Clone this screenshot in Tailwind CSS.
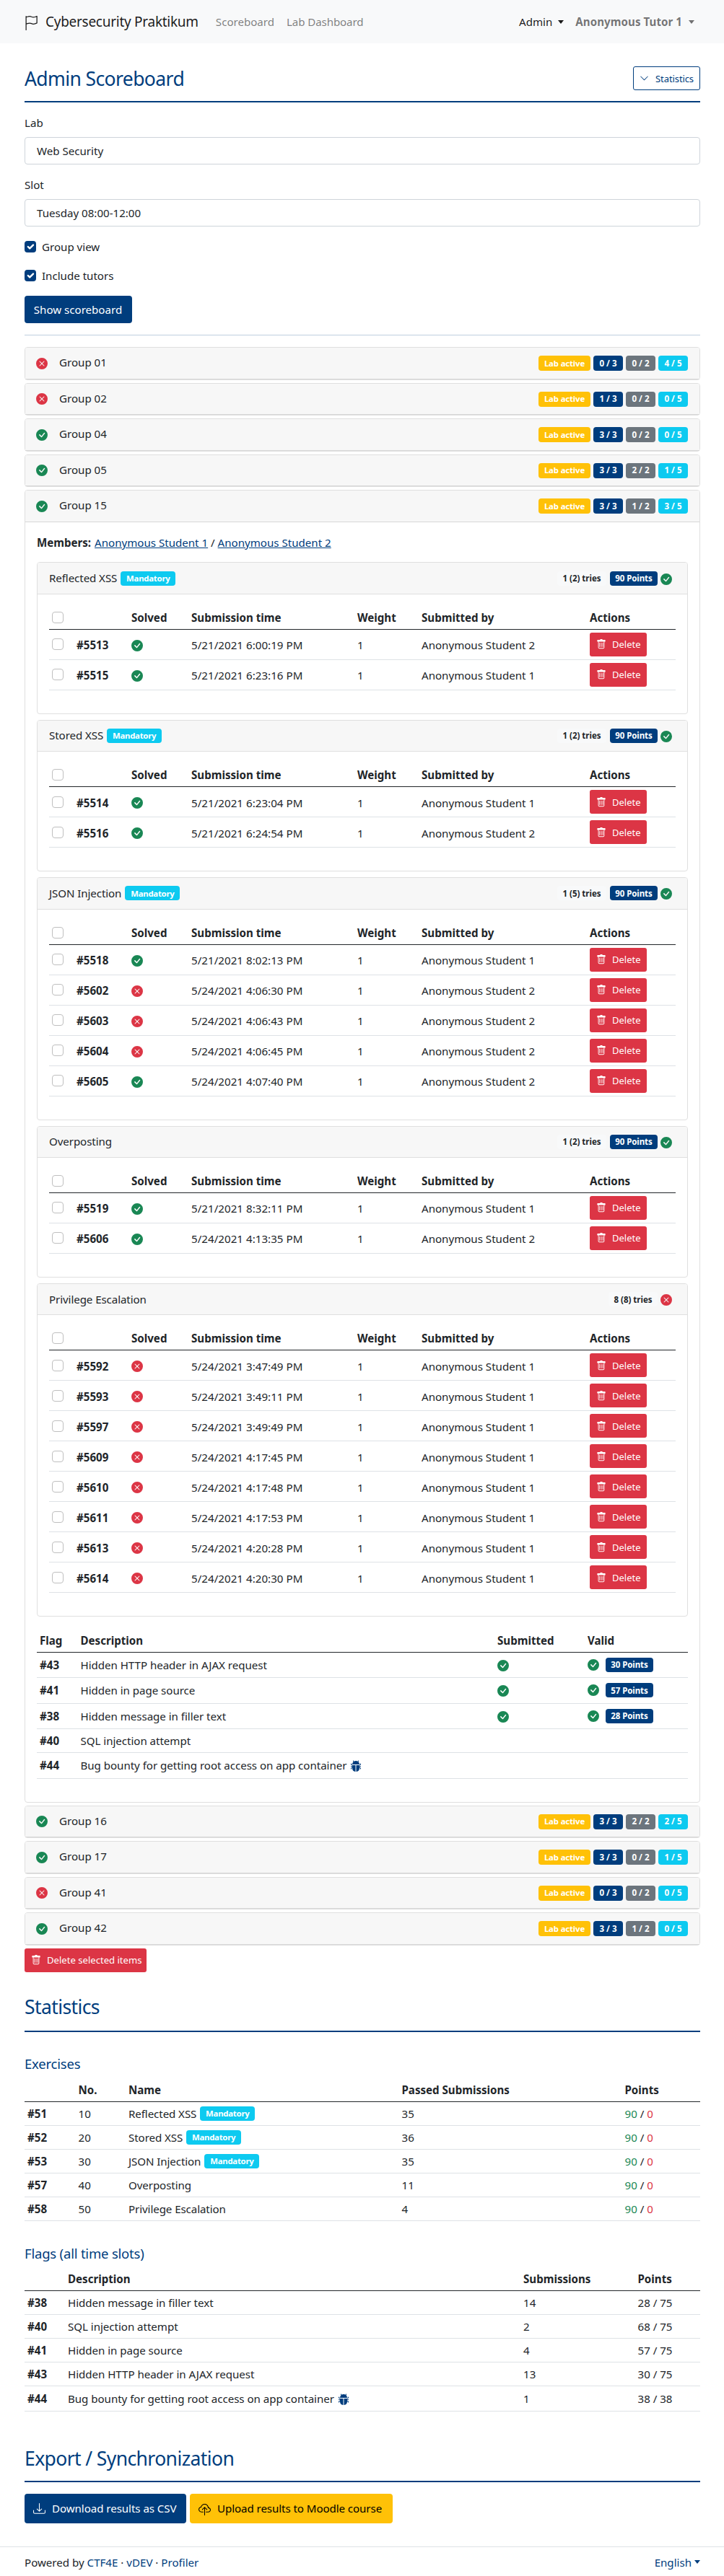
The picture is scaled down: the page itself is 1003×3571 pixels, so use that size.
<!DOCTYPE html>
<html lang="en">
<head>
<meta charset="utf-8">
<title>Admin Scoreboard</title>
<script src="https://cdn.jsdelivr.net/npm/@tailwindcss/browser@4"></script>
</head>
<body class="bg-white text-[#212529] font-['Noto_Sans',sans-serif] text-[15.1px] leading-6">
<svg class="hidden">
  <symbol id="flag" viewBox="0 0 16 16"><path fill-rule="evenodd" d="M14.778.085A.5.5 0 0 1 15 .5V8a.5.5 0 0 1-.314.464l-.012.004-.023.009a12.435 12.435 0 0 1-.397.15c-.264.095-.631.223-1.047.35-.816.252-1.879.523-2.71.523-.847 0-1.548-.28-2.158-.525l-.028-.01C7.68 8.71 7.14 8.5 6.5 8.5c-.7 0-1.638.23-2.437.477A19.626 19.626 0 0 0 3 9.342V15.5a.5.5 0 0 1-1 0V.5a.5.5 0 0 1 1 0v.282c.226-.079.496-.17.79-.26C4.606.272 5.67 0 6.5 0c.84 0 1.524.277 2.121.519l.043.018C9.286.788 9.828 1 10.5 1c.7 0 1.638-.23 2.437-.477a19.587 19.587 0 0 0 1.349-.476l.019-.007a.5.5 0 0 1 .473.045zM14 1.221c-.22.078-.48.167-.766.255-.81.252-1.872.523-2.734.523-.886 0-1.592-.286-2.203-.534l-.008-.003C7.662 1.21 7.139 1 6.5 1c-.669 0-1.606.229-2.415.478A21.294 21.294 0 0 0 3 1.845v6.433c.22-.078.48-.167.766-.255C4.576 7.77 5.638 7.5 6.5 7.5c.847 0 1.548.28 2.158.525l.028.01C9.32 8.29 9.86 8.5 10.5 8.5c.668 0 1.606-.229 2.415-.478A21.317 21.317 0 0 0 14 7.655V1.222z"/></symbol>
  <symbol id="check" viewBox="0 0 16 16"><path d="M16 8A8 8 0 1 1 0 8a8 8 0 0 1 16 0zm-3.97-3.03a.75.75 0 0 0-1.08.022L7.477 9.417 5.384 7.323a.75.75 0 0 0-1.06 1.06L6.97 11.03a.75.75 0 0 0 1.079-.02l3.992-4.99a.75.75 0 0 0-.01-1.05z"/></symbol>
  <symbol id="cross" viewBox="0 0 16 16"><path d="M16 8A8 8 0 1 1 0 8a8 8 0 0 1 16 0zM5.354 4.646a.5.5 0 1 0-.708.708L7.293 8l-2.647 2.646a.5.5 0 0 0 .708.708L8 8.707l2.646 2.647a.5.5 0 0 0 .708-.708L8.707 8l2.647-2.646a.5.5 0 0 0-.708-.708L8 7.293 5.354 4.646z"/></symbol>
  <symbol id="trash" viewBox="0 0 16 16"><path d="M5.5 5.5A.5.5 0 0 1 6 6v6a.5.5 0 0 1-1 0V6a.5.5 0 0 1 .5-.5zm2.5 0a.5.5 0 0 1 .5.5v6a.5.5 0 0 1-1 0V6a.5.5 0 0 1 .5-.5zm3 .5a.5.5 0 0 0-1 0v6a.5.5 0 0 0 1 0V6z"/><path fill-rule="evenodd" d="M14.5 3a1 1 0 0 1-1 1H13v9a2 2 0 0 1-2 2H5a2 2 0 0 1-2-2V4h-.5a1 1 0 0 1-1-1V2a1 1 0 0 1 1-1H6a1 1 0 0 1 1-1h2a1 1 0 0 1 1 1h3.500a1 1 0 0 1 1 1v1zM4 4v9a1 1 0 0 0 1 1h6a1 1 0 0 0 1-1V4H4z"/></symbol>
  <symbol id="bug" viewBox="0 0 16 16"><path d="M4.978.855a.5.5 0 1 0-.956.29l.41 1.352A4.985 4.985 0 0 0 3 6h10a4.985 4.985 0 0 0-1.432-3.503l.41-1.352a.5.5 0 1 0-.956-.29l-.291.956A4.978 4.978 0 0 0 8 1a4.979 4.979 0 0 0-2.731.811l-.29-.956z"/><path d="M13 6v1H8.500v8.975A5 5 0 0 0 13 11h.5a.5.5 0 0 1 .5.5v.5a.5.5 0 1 0 1 0v-.5a1.500 1.500 0 0 0-1.500-1.500H13V9h1.500a.5.5 0 0 0 0-1H13V7h.5A1.500 1.500 0 0 0 15 5.500V5a.5.5 0 0 0-1 0v.5a.5.5 0 0 1-.5.5H13zm-5.500 9.975V7H3V6h-.5a.5.5 0 0 1-.5-.5V5a.5.5 0 0 0-1 0v.5A1.500 1.500 0 0 0 2.500 7H3v1H1.500a.5.5 0 0 0 0 1H3v1h-.5A1.500 1.500 0 0 0 1 11.500v.5a.5.5 0 1 0 1 0v-.5a.5.5 0 0 1 .5-.5H3a5 5 0 0 0 4.500 4.975z"/></symbol>
  <symbol id="chevron" viewBox="0 0 16 16"><path d="M1.646 4.646a.5.5 0 0 1 .708 0L8 10.293l5.646-5.647a.5.5 0 0 1 .708.708l-6 6a.5.5 0 0 1-.708 0l-6-6a.5.5 0 0 1 0-.708z"/></symbol>
  <symbol id="download" viewBox="0 0 16 16"><path d="M.5 9.900a.5.5 0 0 1 .5.5v2.500a1 1 0 0 0 1 1h12a1 1 0 0 0 1-1v-2.500a.5.5 0 0 1 1 0v2.500a2 2 0 0 1-2 2H2a2 2 0 0 1-2-2v-2.500a.5.5 0 0 1 .5-.5z"/><path d="M7.646 11.854a.5.5 0 0 0 .708 0l3-3a.5.5 0 0 0-.708-.708L8.500 10.293V1.500a.5.5 0 0 0-1 0v8.793L5.354 8.146a.5.5 0 1 0-.708.708l3 3z"/></symbol>
  <symbol id="cloud" viewBox="0 0 16 16"><path fill-rule="evenodd" d="M4.406 1.342A5.530 5.530 0 0 1 8 0c2.690 0 4.923 2 5.166 4.579C14.758 4.804 16 6.137 16 7.773 16 9.569 14.502 11 12.687 11H10a.5.5 0 0 1 0-1h2.688C13.979 10 15 8.988 15 7.773c0-1.216-1.020-2.228-2.313-2.228h-.5v-.5C12.188 2.825 10.328 1 8 1a4.530 4.530 0 0 0-2.941 1.100c-.757.652-1.153 1.438-1.153 2.055v.448l-.445.049C2.064 4.805 1 5.952 1 7.318 1 8.785 2.230 10 3.781 10H6a.5.5 0 0 1 0 1H3.781C1.708 11 0 9.366 0 7.318c0-1.763 1.266-3.223 2.942-3.593.143-.863.698-1.723 1.464-2.383z"/><path fill-rule="evenodd" d="M7.646 4.146a.5.5 0 0 1 .708 0l3 3a.5.5 0 0 1-.708.708L8.500 5.707V14.500a.5.5 0 0 1-1 0V5.707L5.354 7.854a.5.5 0 1 1-.708-.708l3-3z"/></symbol>
</svg>

<nav class="flex h-[60px] items-center bg-[#f8f9fa] pl-[33px] pr-[41px]">
  <a class="flex items-center text-[19px] tracking-[-0.27px] text-black/90">
    <svg class="mr-[10px] mt-[3px] size-5 fill-current"><use href="#flag"/></svg>Cybersecurity Praktikum</a>
  <a class="ml-[24px] text-black/50">Scoreboard</a>
  <a class="ml-[17px] tracking-[-0.1px] text-black/50">Lab Dashboard</a>
  <a class="ml-auto flex items-center text-black/90">Admin<span class="ml-2 border-x-[4.5px] border-t-[5px] border-x-transparent border-t-current"></span></a>
  <a class="ml-4 flex items-center font-bold text-black/55"><span class="tracking-[0.06px]">Anonymous Tutor 1</span><span class="ml-[9px] border-x-[4.5px] border-t-[5px] border-x-transparent border-t-current"></span></a>
</nav>

<main class="px-[34px] pr-[33px]">
  <div class="mt-8 flex h-[50px] items-start justify-between border-b-2 border-[#003d7d] text-[#003d7d]">
    <h1 class="text-[26.5px] leading-[35px] tracking-[-0.6px]">Admin Scoreboard</h1>
    <button class="flex h-[33px] w-[93px] items-center justify-between rounded-[3px] border border-[#003d7d] px-2 text-[13px] tracking-[-0.1px]"><svg class="size-[13px] fill-current"><use href="#chevron"/></svg>Statistics</button>
  </div>
  <label class="mt-4 block">Lab</label>
  <div class="mt-2 flex h-[38px] items-center rounded border border-[#ced4da] px-4">Web Security</div>
  <label class="mt-4 block">Slot</label>
  <div class="mt-2 flex h-[38px] items-center rounded border border-[#ced4da] px-4">Tuesday 08:00-12:00</div>
  <div class="mt-4 flex items-center"><span class="mr-2 flex size-4 items-center justify-center rounded-[4px] bg-[#003d7d]"><svg viewBox="0 0 20 20" class="size-4 fill-none stroke-white stroke-3"><path stroke-linecap="round" stroke-linejoin="round" d="m6 10 3 3 6-6"/></svg></span>Group view</div>
  <div class="mt-4 flex items-center"><span class="mr-2 flex size-4 items-center justify-center rounded-[4px] bg-[#003d7d]"><svg viewBox="0 0 20 20" class="size-4 fill-none stroke-white stroke-3"><path stroke-linecap="round" stroke-linejoin="round" d="m6 10 3 3 6-6"/></svg></span>Include tutors</div>
  <button class="mt-4 flex h-[38px] w-[149px] items-center justify-center rounded bg-[#003d7d] pr-px text-white">Show scoreboard</button>
  <div class="mt-4 mb-[16.300px] h-px bg-[#bfcedf]"></div>

  <div id="groups"></div>

  <button class="flex h-[33px] w-[169px] items-center rounded-[3px] bg-[#dc3545] pl-[9px] text-[13.100px] text-white"><svg class="mr-2 size-[14px] fill-current"><use href="#trash"/></svg>Delete selected items</button>

  <h2 class="mt-[31.400px] h-[51.600px] border-b-2 border-[#003d7d] text-[26.500px] leading-[34px] tracking-[-0.6px] text-[#003d7d]">Statistics</h2>
  <h3 class="mt-[32.300px] text-[18.500px] tracking-[-0.2px] text-[#003d7d]">Exercises</h3>
  <table class="mt-[7.700px] w-full table-fixed border-separate border-spacing-0 text-left [&_td]:border-b [&_td]:border-[#dee2e6] [&_td]:px-1 [&_th]:border-b [&_th]:px-1 [&_th]:border-[#212529] [&_td]:py-0 [&_th]:py-0">
    <thead><tr class="h-[33px]"><th class="w-[70.500px]"></th><th class="w-[69.500px]">No.</th><th class="w-[378.500px]">Name</th><th class="w-[309px]">Passed Submissions</th><th>Points</th></tr></thead>
    <tbody id="exercises"></tbody>
  </table>
  <h3 class="mt-[32.600px] text-[18.500px] tracking-[-0.2px] text-[#003d7d]">Flags (all time slots)</h3>
  <table class="mt-[7.400px] w-full table-fixed border-separate border-spacing-0 text-left [&_td]:border-b [&_td]:border-[#dee2e6] [&_td]:px-1 [&_th]:border-b [&_th]:px-1 [&_th]:border-[#212529] [&_td]:py-0 [&_th]:py-0">
    <thead><tr class="h-[33px]"><th class="w-[56px]"></th><th class="w-[631px]">Description</th><th class="w-[158.500px]">Submissions</th><th>Points</th></tr></thead>
    <tbody id="flags"></tbody>
  </table>

  <h2 class="mt-12 h-[50px] border-b-2 border-[#003d7d] text-[26.500px] leading-[34px] tracking-[-0.6px] text-[#003d7d]">Export / Synchronization</h2>
  <div class="mt-4 flex gap-[5px]">
    <button class="flex h-[41px] w-[224px] items-center rounded bg-[#003d7d] pl-3 tracking-[-0.05px] text-white"><svg class="mr-[9px] size-[17px] fill-current"><use href="#download"/></svg>Download results as CSV</button>
    <button class="flex h-[41px] w-[281px] items-center rounded bg-[#ffc107] pl-3 tracking-[-0.07px] text-black"><svg class="mr-[9px] mt-1 size-[17px] fill-current"><use href="#cloud"/></svg>Upload results to Moodle course</button>
  </div>
</main>
<footer class="mt-8 flex h-[41px] items-center justify-between border-t border-[#dee2e6] pt-[2px] pl-[34px] pr-[33px]">
  <div>Powered by <a class="text-[#003d7d]">CTF4E</a> · <a class="text-[#003d7d]">vDEV</a> · <a class="text-[#003d7d]">Profiler</a></div>
  <a class="flex items-center text-[#003d7d]">English<span class="ml-1 border-x-[4.5px] border-t-[5px] border-x-transparent border-t-current"></span></a>
</footer>

<script>
const status = ok => ok
  ? '<svg class="size-4 shrink-0 fill-[#198754]"><use href="#check"/></svg>'
  : '<svg class="size-4 shrink-0 fill-[#dc3545]"><use href="#cross"/></svg>';
const box = '<span class="block size-4 rounded-[4px] border border-[#bfbfbf] bg-white"></span>';
const mandatory = '<span class="ml-[5px] flex h-5 w-[76px] items-center justify-center rounded bg-[#0dcaf0] pt-px text-[11.4px] font-bold tracking-[-0.25px] text-white">Mandatory</span>';
const points = n => `<span class="flex h-5 w-[66px] items-center justify-center rounded bg-[#003d7d] pt-px text-[11.5px] font-bold tracking-[-0.1px] text-white">${n} Points</span>`;
const bug = '<svg class="ml-[5px] mt-[2px] size-4 fill-[#003d7d]"><use href="#bug"/></svg>';

const submission = ([id, ok, time, who]) => `
  <tr class="h-[42px]">
    <td>${box}</td><td class="pt-[2px]! font-bold">#${id}</td><td class="pt-[3px]!">${status(ok)}</td>
    <td class="pt-[2px]! tracking-[0.04px]">${time}</td><td class="pt-[2px]!">1</td><td class="pt-[2px]!">Anonymous Student ${who}</td>
    <td><button class="flex h-[33px] w-[79px] items-center rounded-[3px] bg-[#dc3545] pl-[9px] text-[13px] text-white"><svg class="mr-2 size-[14px] fill-current"><use href="#trash"/></svg>Delete</button></td>
  </tr>`;

const exercise = ([name, must, tries, ok, rows]) => `
  <section class="mb-2 rounded border border-[#dfdfdf]">
    <header class="flex h-[43.4px] items-center rounded-t-[3px] border-b border-[#dfdfdf] bg-[#f7f7f7] px-4">
      <span class="pb-[1px] tracking-[-0.08px]">${name}</span>${must ? mandatory : ''}
      <span class="ml-auto flex h-5 w-[68px] items-center justify-center rounded bg-[#f8f9fa] pt-px text-[11.5px] font-bold ${ok ? 'mr-[5px]' : 'mr-0'}">${tries} tries</span>
      ${ok ? points(90) : ''}<span class="ml-1 mr-[5px] mt-[2px]">${status(ok)}</span>
    </header>
    <div class="px-4 pt-4 pb-8">
      <table class="w-full table-fixed border-separate border-spacing-0 text-left [&_td]:border-b [&_td]:border-[#dee2e6] [&_td]:px-1 [&_th]:border-b [&_th]:px-1 [&_th]:border-[#212529] [&_td]:py-0 [&_th]:py-0">
        <thead><tr class="h-[33px]"><th class="w-[34px]">${box}</th><th class="w-[76px]"></th><th class="w-[83px]">Solved</th><th class="w-[230px]">Submission time</th><th class="w-[89px]">Weight</th><th class="w-[233px]">Submitted by</th><th>Actions</th></tr></thead>
        <tbody>${rows.map(submission).join('')}</tbody>
      </table>
    </div>
  </section>`;

const flag = ([id, text, pts, height, isBug]) => `
  <tr class="${height}">
    <td class="font-bold">#${id}</td><td><div class="flex items-center tracking-[-0.03px]">${text}${isBug ? bug : ''}</div></td>
    <td class="pt-[2px]!">${pts ? status(true) : ''}</td>
    <td><div class="flex items-center gap-[9px]">${pts ? status(true) + points(pts) : ''}</div></td>
  </tr>`;

const exercises = [
  ['Reflected XSS', 1, '1 (2)', 1, [[5513,1,'5/21/2021 6:00:19 PM',2],[5515,1,'5/21/2021 6:23:16 PM',1]]],
  ['Stored XSS', 1, '1 (2)', 1, [[5514,1,'5/21/2021 6:23:04 PM',1],[5516,1,'5/21/2021 6:24:54 PM',2]]],
  ['JSON Injection', 1, '1 (5)', 1, [[5518,1,'5/21/2021 8:02:13 PM',1],[5602,0,'5/24/2021 4:06:30 PM',2],[5603,0,'5/24/2021 4:06:43 PM',2],[5604,0,'5/24/2021 4:06:45 PM',2],[5605,1,'5/24/2021 4:07:40 PM',2]]],
  ['Overposting', 0, '1 (2)', 1, [[5519,1,'5/21/2021 8:32:11 PM',1],[5606,1,'5/24/2021 4:13:35 PM',2]]],
  ['Privilege Escalation', 0, '8 (8)', 0, [[5592,0,'5/24/2021 3:47:49 PM',1],[5593,0,'5/24/2021 3:49:11 PM',1],[5597,0,'5/24/2021 3:49:49 PM',1],[5609,0,'5/24/2021 4:17:45 PM',1],[5610,0,'5/24/2021 4:17:48 PM',1],[5611,0,'5/24/2021 4:17:53 PM',1],[5613,0,'5/24/2021 4:20:28 PM',1],[5614,0,'5/24/2021 4:20:30 PM',1]]],
];
const groupFlags = [
  [43,'Hidden HTTP header in AJAX request',30,'h-[35px]'],
  [41,'Hidden in page source',57,'h-[36px]'],
  [38,'Hidden message in filler text',28,'h-[35px]'],
  [40,'SQL injection attempt',0,'h-[33px]'],
  [44,'Bug bounty for getting root access on app container',0,'h-[36px]',1],
];

const details = `
  <div class="px-4 pt-4 pb-8">
    <p class="mb-[15.6px]"><b class="mr-[5px]">Members:</b><a class="text-[#003d7d] underline">Anonymous Student 1</a> / <a class="text-[#003d7d] underline">Anonymous Student 2</a></p>
    ${exercises.map(exercise).join('')}
    <table class="mt-[16.6px] w-full table-fixed border-separate border-spacing-0 text-left [&_td]:border-b [&_td]:border-[#dee2e6] [&_td]:px-1 [&_th]:border-b [&_th]:px-1 [&_th]:border-[#212529] [&_td]:py-0 [&_th]:py-0">
      <thead><tr class="h-[33px]"><th class="w-[56.5px]">Flag</th><th class="w-[577.5px]">Description</th><th class="w-[125px]">Submitted</th><th>Valid</th></tr></thead>
      <tbody>${groupFlags.map(flag).join('')}</tbody>
    </table>
  </div>`;

const group = ([no, ok, a, b, c]) => `
  <section class="mb-1 rounded border border-[#dfdfdf]">
    <header class="flex h-[43.5px] items-center gap-1 rounded-t-[3px] border-b border-[#d8d8d8] bg-[#f7f7f7] pl-[15px] pr-4">
      ${status(ok)}<span class="ml-3 mr-auto pb-[3px]">Group ${no}</span>
      <span class="flex h-[21px] w-[72px] items-center justify-center rounded bg-[#ffc107] text-[11.4px] font-bold tracking-[-0.15px] text-white">Lab active</span>
      <span class="flex h-[21px] w-[41px] items-center justify-center rounded bg-[#003d7d] text-[11.6px] font-bold text-white">${a} / 3</span>
      <span class="flex h-[21px] w-[41px] items-center justify-center rounded bg-[#6c757d] text-[11.6px] font-bold text-white">${b} / 2</span>
      <span class="flex h-[21px] w-[41px] items-center justify-center rounded bg-[#0dcaf0] text-[11.6px] font-bold text-white">${c} / 5</span>
    </header>${no === '15' ? details : ''}
  </section>`;

document.getElementById('groups').innerHTML = [
  ['01',0,0,0,4],['02',0,1,0,0],['04',1,3,0,0],['05',1,3,2,1],['15',1,3,1,3],['16',1,3,2,2],['17',1,3,0,1],['41',0,0,0,0],['42',1,3,1,0],
].map(group).join('');

document.getElementById('exercises').innerHTML = [
  [51,10,'Reflected XSS',1,35],[52,20,'Stored XSS',1,36],[53,30,'JSON Injection',1,35],[57,40,'Overposting',0,11],[58,50,'Privilege Escalation',0,4],
].map(([id, no, name, must, n]) => `<tr class="h-[33px]"><td class="font-bold">#${id}</td><td>${no}</td><td><div class="flex items-center tracking-[-0.08px]">${name}${must ? mandatory : ''}</div></td><td>${n}</td><td><span class="text-[#198754]">90</span> / <span class="text-[#dc3545]">0</span></td></tr>`).join('');

document.getElementById('flags').innerHTML = [
  [38,'Hidden message in filler text',14,'28 / 75'],[40,'SQL injection attempt',2,'68 / 75'],[41,'Hidden in page source',4,'57 / 75'],[43,'Hidden HTTP header in AJAX request',13,'30 / 75'],[44,'Bug bounty for getting root access on app container',1,'38 / 38'],
].map(([id, text, n, pts]) => `<tr class="${id === 44 ? 'h-[35px]' : 'h-[33px]'}"><td class="font-bold">#${id}</td><td><div class="flex items-center tracking-[-0.03px]">${text}${id === 44 ? bug : ''}</div></td><td>${n}</td><td>${pts}</td></tr>`).join('');
</script>
</body>
</html>
